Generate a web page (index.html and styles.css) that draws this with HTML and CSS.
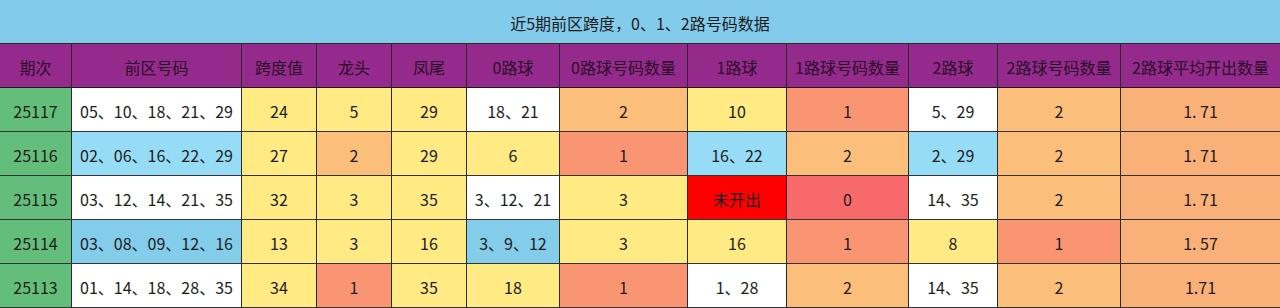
FILE: index.html
```html
<!DOCTYPE html>
<html lang="zh-CN">
<head>
<meta charset="utf-8">
<title>近5期前区跨度，0、1、2路号码数据</title>
<link rel="stylesheet" href="styles.css">
</head>
<body>
<div class="sheet">
  <div class="title">近5期前区跨度，0、1、2路号码数据</div>

  <div class="c hd">期次</div>
  <div class="c hd">前区号码</div>
  <div class="c hd">跨度值</div>
  <div class="c hd">龙头</div>
  <div class="c hd">凤尾</div>
  <div class="c hd">0路球</div>
  <div class="c hd">0路球号码数量</div>
  <div class="c hd">1路球</div>
  <div class="c hd">1路球号码数量</div>
  <div class="c hd">2路球</div>
  <div class="c hd">2路球号码数量</div>
  <div class="c hd last">2路球平均开出数量</div>

  <div class="c green">25117</div>
  <div class="c white">05、10、18、21、29</div>
  <div class="c yellow">24</div>
  <div class="c yellow">5</div>
  <div class="c yellow">29</div>
  <div class="c white">18、21</div>
  <div class="c orange">2</div>
  <div class="c yellow">10</div>
  <div class="c salmon">1</div>
  <div class="c white">5、29</div>
  <div class="c orange">2</div>
  <div class="c avg last">1. 71</div>

  <div class="c green">25116</div>
  <div class="c lblue">02、06、16、22、29</div>
  <div class="c yellow">27</div>
  <div class="c orange">2</div>
  <div class="c yellow">29</div>
  <div class="c yellow">6</div>
  <div class="c salmon">1</div>
  <div class="c lblue">16、22</div>
  <div class="c orange">2</div>
  <div class="c lblue">2、29</div>
  <div class="c orange">2</div>
  <div class="c avg last">1. 71</div>

  <div class="c green">25115</div>
  <div class="c white">03、12、14、21、35</div>
  <div class="c yellow">32</div>
  <div class="c yellow">3</div>
  <div class="c yellow">35</div>
  <div class="c white">3、12、21</div>
  <div class="c yellow">3</div>
  <div class="c red">未开出</div>
  <div class="c pink">0</div>
  <div class="c white">14、35</div>
  <div class="c orange">2</div>
  <div class="c avg last">1. 71</div>

  <div class="c green">25114</div>
  <div class="c blue">03、08、09、12、16</div>
  <div class="c yellow">13</div>
  <div class="c yellow">3</div>
  <div class="c yellow">16</div>
  <div class="c blue">3、9、12</div>
  <div class="c yellow">3</div>
  <div class="c yellow">16</div>
  <div class="c salmon">1</div>
  <div class="c yellow">8</div>
  <div class="c salmon">1</div>
  <div class="c avg last">1. 57</div>

  <div class="c green">25113</div>
  <div class="c white">01、14、18、28、35</div>
  <div class="c yellow">34</div>
  <div class="c salmon">1</div>
  <div class="c yellow">35</div>
  <div class="c yellow">18</div>
  <div class="c salmon">1</div>
  <div class="c white">1、28</div>
  <div class="c orange">2</div>
  <div class="c white">14、35</div>
  <div class="c orange">2</div>
  <div class="c avg last">1.71</div>
</div>
</body>
</html>
```

FILE: styles.css
```css
html, body {
  margin: 0;
  padding: 0;
  background: #ffffff;
}

.sheet {
  width: 1280px;
  display: grid;
  grid-template-columns: 72px 170px 75px 75px 75px 93px 128px 99px 122px 89px 123px 159px;
  grid-auto-rows: 44px;
  font-family: "Noto Sans CJK SC", "Microsoft YaHei", sans-serif;
  font-size: 16px;
  color: #1c1c1c;
}

.title {
  grid-column: 1 / -1;
  background: #82cbeb;
  border-bottom: 1px solid #2a2a2a;
  display: flex;
  align-items: center;
  justify-content: center;
  padding-top: 2px;
  box-sizing: border-box;
}

.c {
  box-sizing: border-box;
  border-right: 1px solid #2a2a2a;
  border-bottom: 1px solid #333333;
  display: flex;
  align-items: center;
  justify-content: center;
  padding-top: 3px;
  white-space: nowrap;
}

.c.last {
  border-right: none;
}

.hd {
  background: #952a8d;
  color: #2a0d27;
  border-bottom-color: #1a1a1a;
}

.green  { background: #63be7b; }
.white  { background: #ffffff; }
.yellow { background: #ffea84; }
.orange { background: #fbbe7b; }
.salmon { background: #fa9574; }
.avg    { background: #fab079; }
.pink   { background: #f8696b; }
.red    { background: #ff0000; }
.lblue  { background: #97dcf6; }
.blue   { background: #83cdeb; }
```
